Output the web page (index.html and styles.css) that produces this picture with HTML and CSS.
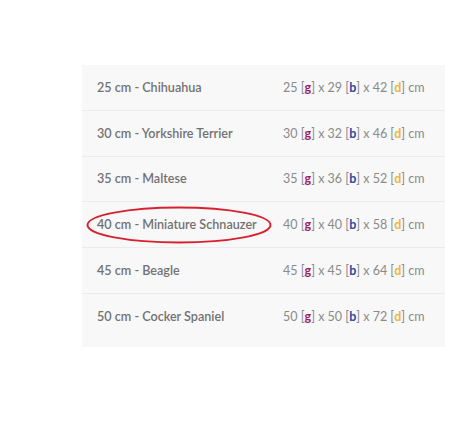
FILE: index.html
```html
<!DOCTYPE html>
<html>
<head>
<meta charset="utf-8">
<link rel="stylesheet" href="styles.css">
</head>
<body>
<div class="page">
  <div class="panel">
    <div class="row"><span class="name">25 cm - Chihuahua</span><span class="dims">25 [<b class="g">g</b>] x 29 [<b class="b">b</b>] x 42 [<b class="d">d</b>] cm</span></div>
    <div class="row"><span class="name">30 cm - Yorkshire Terrier</span><span class="dims">30 [<b class="g">g</b>] x 32 [<b class="b">b</b>] x 46 [<b class="d">d</b>] cm</span></div>
    <div class="row"><span class="name">35 cm - Maltese</span><span class="dims">35 [<b class="g">g</b>] x 36 [<b class="b">b</b>] x 52 [<b class="d">d</b>] cm</span></div>
    <div class="row"><span class="name circled">40 cm - Miniature Schnauzer<svg class="ring" width="190" height="40" viewBox="0 0 190 40"><ellipse cx="95" cy="20" rx="91.5" ry="17.5" fill="none" stroke="#d8212f" stroke-width="2"/></svg></span><span class="dims">40 [<b class="g">g</b>] x 40 [<b class="b">b</b>] x 58 [<b class="d">d</b>] cm</span></div>
    <div class="row"><span class="name">45 cm - Beagle</span><span class="dims">45 [<b class="g">g</b>] x 45 [<b class="b">b</b>] x 64 [<b class="d">d</b>] cm</span></div>
    <div class="row last"><span class="name">50 cm - Cocker Spaniel</span><span class="dims">50 [<b class="g">g</b>] x 50 [<b class="b">b</b>] x 72 [<b class="d">d</b>] cm</span></div>
  </div>
</div>
</body>
</html>
```
FILE: styles.css
```css
html, body { margin: 0; padding: 0; background: #ffffff; }
.page {
  padding: 65px 0 0 82px;
  font-family: Lato, "Liberation Sans", sans-serif;
}
.panel {
  width: 363px;
  background: #f8f8f8;
  padding-bottom: 8px;
}
.row {
  display: flex;
  align-items: center;
  height: 44.8px;
  border-bottom: 1px solid #ebebeb;
  padding-left: 15px;
}
.row.last { border-bottom: none; }
.name {
  width: 186px;
  font-size: 12.6px;
  font-weight: 600;
  color: #727272;
  position: relative;
}
.ring {
  position: absolute;
  left: -13px;
  top: -12px;
}
.dims {
  font-size: 12.5px;
  color: #8a8a8a;
}
.dims b { font-weight: 700; }
.g { color: #9c1f6f; }
.b { color: #2c4a9e; }
.d { color: #f2b632; }
```
